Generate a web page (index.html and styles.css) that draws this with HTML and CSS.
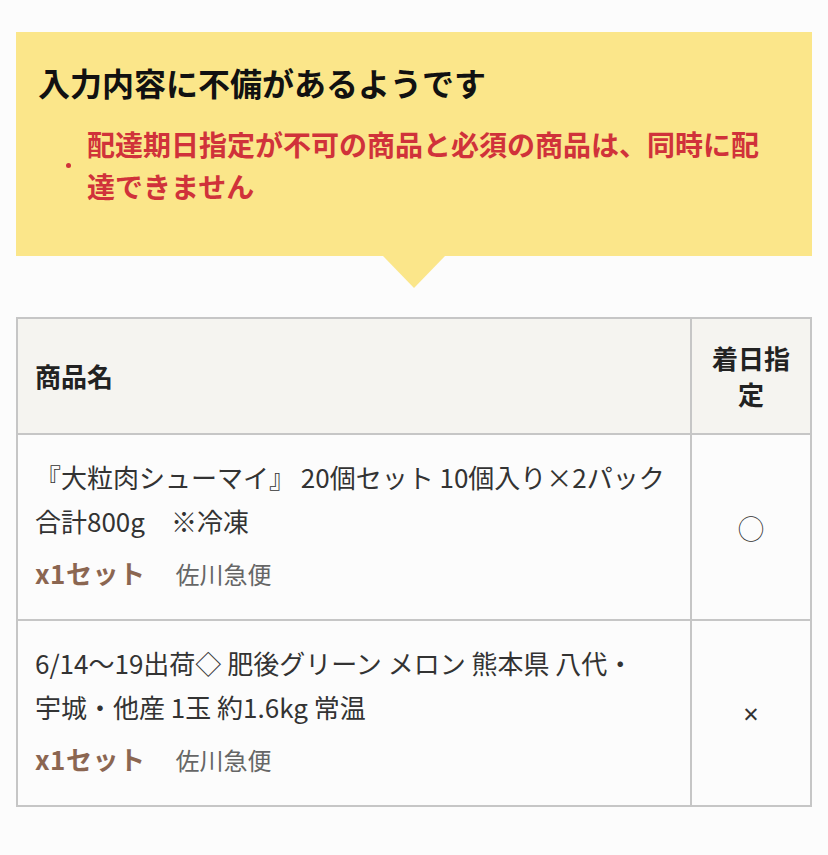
FILE: index.html
```html
<!DOCTYPE html>
<html lang="ja">
<head>
<meta charset="utf-8">
<title>入力内容に不備があるようです</title>
<link rel="stylesheet" href="styles.css">
</head>
<body>
<div class="page">
  <section class="alert">
    <h2 class="alert-title">入力内容に不備があるようです</h2>
    <ul class="alert-list">
      <li class="alert-item"><span class="dot"></span><span class="alert-text">配達期日指定が不可の商品と必須の商品は、同時に配達できません</span></li>
    </ul>
  </section>
  <table class="items">
    <colgroup><col><col class="col-date"></colgroup>
    <thead>
      <tr><th class="th-name">商品名</th><th class="th-date">着日指定</th></tr>
    </thead>
    <tbody>
      <tr>
        <td class="td-name">
          <p class="product">『大粒肉シューマイ』 20個セット 10個入り×2パック 合計800g　※冷凍</p>
          <p class="meta"><span class="qty">x1セット</span><span class="carrier">佐川急便</span></p>
        </td>
        <td class="td-date"><span class="ok">◯</span></td>
      </tr>
      <tr>
        <td class="td-name">
          <p class="product">6/14〜19出荷◇ 肥後グリーン メロン 熊本県 八代・<span class="nobr">宇城</span>・他産 1玉 約1.6kg 常温</p>
          <p class="meta"><span class="qty">x1セット</span><span class="carrier">佐川急便</span></p>
        </td>
        <td class="td-date"><span class="ng">×</span></td>
      </tr>
    </tbody>
  </table>
</div>
</body>
</html>
```

FILE: styles.css
```css
html, body {
  margin: 0;
  padding: 0;
  background: #fcfcfc;
}
body {
  font-family: "Noto Sans CJK JP", "Noto Sans", sans-serif;
  color: #333;
}
.page {
  padding: 32px 16px 40px;
}
.alert {
  position: relative;
  background: #fbe68a;
  padding: 26px 40px 49px 22px;
  margin-bottom: 61px;
}
.alert::after {
  content: "";
  position: absolute;
  left: 50%;
  bottom: -32px;
  margin-left: -31px;
  border-left: 31px solid transparent;
  border-right: 31px solid transparent;
  border-top: 32px solid #fbe68a;
}
.alert-title {
  margin: 0;
  font-size: 32px;
  line-height: 48px;
  font-weight: 700;
  color: #111;
}
.alert-list {
  list-style: none;
  margin: 17px 0 0;
  padding: 0;
}
.alert-item {
  display: flex;
  align-items: center;
}
.dot {
  flex: none;
  width: 5px;
  height: 5px;
  border-radius: 50%;
  background: #d0323a;
  margin: 0 16px 0 28px;
}
.alert-text {
  font-size: 28px;
  line-height: 42px;
  font-weight: 700;
  color: #d0323a;
}
.items {
  width: 100%;
  border-collapse: collapse;
  table-layout: fixed;
  border: 2px solid #c6c6c6;
}
.col-date {
  width: 120px;
}
.items th,
.items td {
  border: 2px solid #c6c6c6;
}
.items th {
  background: #f5f4f0;
  font-size: 26px;
  line-height: 36px;
  font-weight: 700;
  color: #222;
  vertical-align: middle;
}
.th-name {
  text-align: left;
  padding: 21px 17px;
}
.th-date {
  text-align: center;
  padding: 21px 20px;
}
.td-name {
  padding: 20px 17px 25px;
  vertical-align: top;
}
.td-date {
  text-align: center;
  vertical-align: middle;
  color: #333;
}
.product {
  margin: 0;
  font-size: 26px;
  line-height: 44px;
  color: #333;
}
.nobr {
  white-space: nowrap;
}
.meta {
  margin: 10px 0 0;
  line-height: 40px;
  font-size: 24px;
}
.qty {
  font-weight: 700;
  color: #8b6651;
  font-size: 26px;
  letter-spacing: 0.5px;
}
.carrier {
  color: #666;
  margin-left: 30px;
}
.ok {
  font-family: "Noto Sans CJK JP", sans-serif;
  font-size: 26px;
  font-weight: 400;
}
.ng {
  font-family: "Noto Sans", sans-serif;
  font-size: 27px;
}
```
